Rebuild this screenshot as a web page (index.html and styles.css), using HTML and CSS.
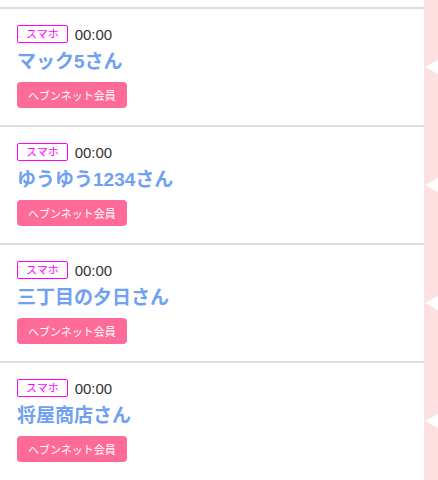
FILE: index.html
```html
<!DOCTYPE html>
<html lang="ja">
<head>
  <meta charset="UTF-8" />
  <title>メンバー一覧</title>
  <link rel="stylesheet" href="styles.css">
</head>
<body>
  <div class="page">
    <ul class="member-list">
      <li class="member">
        <div class="member-meta">
          <span class="device-tag">スマホ</span>
          <span class="time">00:00</span>
        </div>
        <div class="member-name">マック5さん</div>
        <button class="member-btn">ヘブンネット会員</button>
      </li>
      <li class="member">
        <div class="member-meta">
          <span class="device-tag">スマホ</span>
          <span class="time">00:00</span>
        </div>
        <div class="member-name">ゆうゆう1234さん</div>
        <button class="member-btn">ヘブンネット会員</button>
      </li>
      <li class="member">
        <div class="member-meta">
          <span class="device-tag">スマホ</span>
          <span class="time">00:00</span>
        </div>
        <div class="member-name">三丁目の夕日さん</div>
        <button class="member-btn">ヘブンネット会員</button>
      </li>
      <li class="member">
        <div class="member-meta">
          <span class="device-tag">スマホ</span>
          <span class="time">00:00</span>
        </div>
        <div class="member-name">将屋商店さん</div>
        <button class="member-btn">ヘブンネット会員</button>
      </li>
    </ul>
  </div>
</body>
</html>
```

FILE: styles.css
```css
body {
  margin: 0;
  font-family: "Liberation Sans", "Noto Sans CJK JP", sans-serif;
  color: #333;
}

.page {
  background-color: #ffe0e0;
  padding-right: 14px;
  height: 480px;
  overflow: hidden;
}

.member-list {
  list-style: none;
  margin: 0;
  padding: 7px 0 0;
  background: #fff;
  height: 100%;
  box-sizing: border-box;
}

.member {
  position: relative;
  border-top: 2px solid #dcdcdc;
  padding: 16px 17px 17px;
}

/* white arrow cut into the pink strip */
.member::after {
  content: "";
  position: absolute;
  right: -14px;
  top: 50%;
  margin-top: -7px;
  border-top: 7px solid transparent;
  border-bottom: 7px solid transparent;
  border-right: 13px solid #fff;
}

.member-meta {
  display: flex;
  align-items: center;
  gap: 7px;
  height: 18px;
}

.device-tag {
  box-sizing: border-box;
  height: 18px;
  line-height: 16px;
  padding: 0 8px;
  border: 1px solid #f0f;
  border-radius: 2px;
  color: #f0f;
  font-size: 11px;
}

.time {
  font-size: 15px;
  color: #333;
}

.member-name {
  margin-top: 6px;
  font-size: 19px;
  line-height: 26px;
  font-weight: bold;
  color: #6fa0f2;
}

.member-btn {
  display: block;
  margin-top: 7px;
  height: 26px;
  padding: 0 11px;
  background-color: #ff6b98;
  color: #fff;
  border: none;
  border-radius: 4px;
  font-family: inherit;
  font-size: 11px;
  cursor: pointer;
}
```
